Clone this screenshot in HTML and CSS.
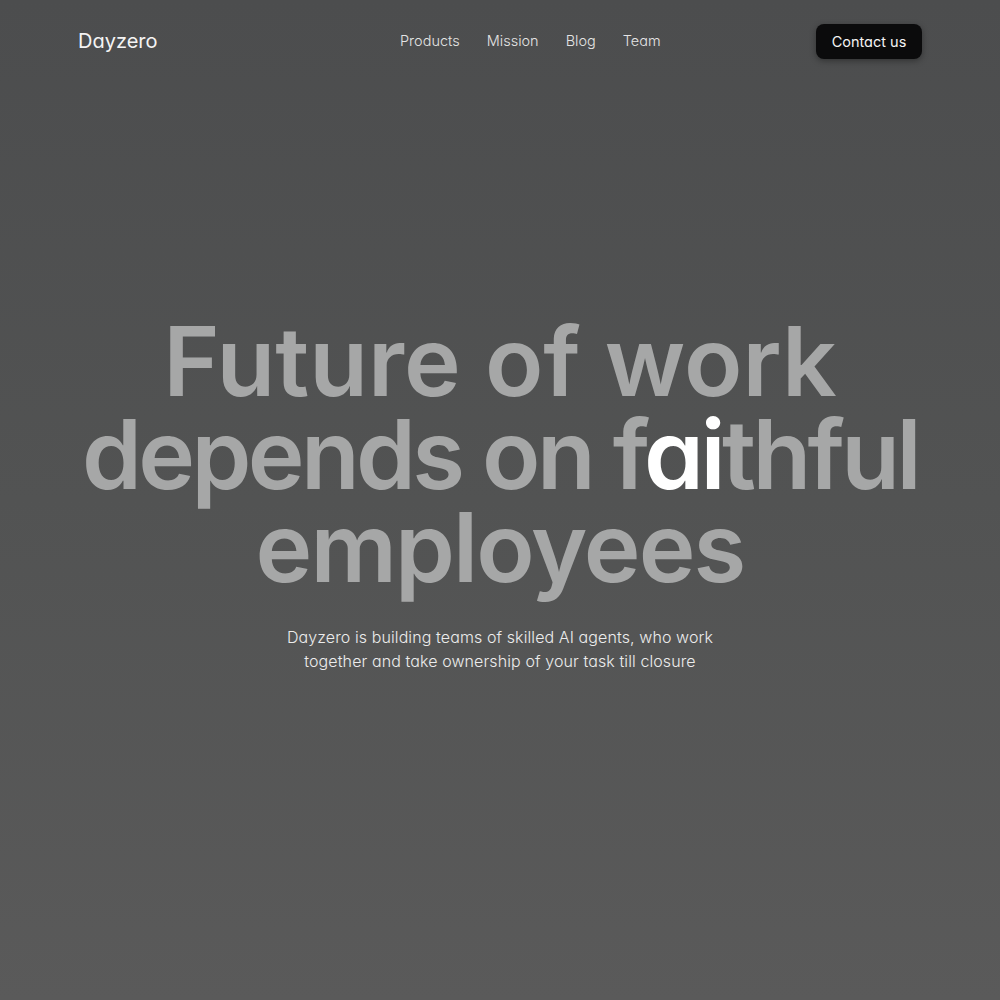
FILE: index.html
```html
<!DOCTYPE html>
<html lang="en">
<head>
<meta charset="utf-8">
<title>Dayzero</title>
<link rel="stylesheet" href="styles.css">
</head>
<body>
<div class="page">
  <header class="nav">
    <div class="logo">Dayzero</div>
    <nav class="links">
      <a href="#">Products</a>
      <a href="#">Mission</a>
      <a href="#">Blog</a>
      <a href="#">Team</a>
    </nav>
    <a class="cta" href="#">Contact us</a>
  </header>
  <main class="hero">
    <h1 class="headline">
      <span class="line line-1">Future of work</span>
      <span class="line line-2">depends on f<span class="ai">ai</span>thful</span>
      <span class="line line-3">employees</span>
    </h1>
    <p class="sub">Dayzero is building teams of skilled AI agents, who work<br>together and take ownership of your task till closure</p>
  </main>
</div>
</body>
</html>
```
FILE: styles.css
```css
* { box-sizing: border-box; }
html, body { margin: 0; padding: 0; }
body {
  font-family: Inter, "Noto Sans", sans-serif;
  font-feature-settings: "cv11" 1;
  background: linear-gradient(180deg, #4c4d4e 0%, #525353 50%, #5a5a5a 100%);
  min-height: 1000px;
  color: #fff;
}
.page { min-height: 1000px; }
.nav {
  display: flex;
  align-items: center;
  justify-content: space-between;
  padding: 24px 78px 0 78px;
  height: 58px;
  position: relative;
}
.logo {
  font-size: 20px;
  font-weight: 400;
  color: #f4f4f4;
}
.links {
  position: absolute;
  left: 400px;
  top: 32px;
  display: flex;
  gap: 27px;
}
.links a {
  color: #e4e4e4;
  text-decoration: none;
  font-size: 14.5px;
  font-weight: 300;
}
.cta {
  display: inline-flex;
  align-items: center;
  justify-content: center;
  width: 106px;
  height: 35px;
  background: #0b0b0c;
  color: #f4f4f4;
  border-radius: 8px;
  text-decoration: none;
  font-size: 14.5px;
  font-weight: 400;
  box-shadow: 0 2px 6px rgba(0,0,0,0.35);
}
.hero {
  display: flex;
  flex-direction: column;
  align-items: center;
  padding-top: 257px;
}
.headline {
  margin: 0;
  display: flex;
  flex-direction: column;
  align-items: center;
  color: #a6a7a7;
  font-weight: 600;
  font-size: 96px;
  line-height: 93px;
  letter-spacing: -3.6px;
}
.line { display: block; white-space: nowrap; }
.line-1 { letter-spacing: 0; }
.line-3 { letter-spacing: -1.9px; }
.ai { color: #ffffff; }
.sub {
  margin: 31px 0 0 0;
  text-align: center;
  font-size: 16px;
  line-height: 24px;
  font-weight: 300;
  letter-spacing: 0.1px;
  color: #ececec;
}
```
